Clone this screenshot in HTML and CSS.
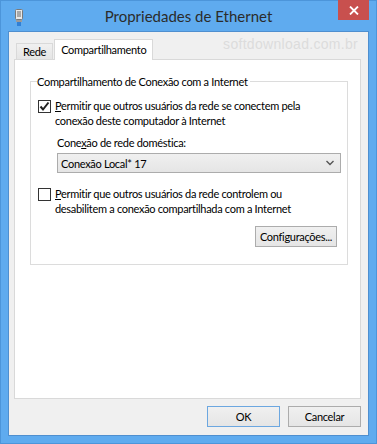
FILE: index.html
```html
<!DOCTYPE html>
<html lang="pt-BR">
<head>
<meta charset="utf-8">
<title>Propriedades de Ethernet</title>
<link rel="stylesheet" href="styles.css">
</head>
<body>
<div class="window">
  <div class="titlebar">
    <svg class="app-icon" width="8" height="17" viewBox="0 0 8 17">
      <rect x="0.5" y="0.5" width="7" height="10" rx="1" fill="#e8e8e8" stroke="#7a7a7a"/>
      <rect x="2.5" y="2" width="1" height="6" fill="#6b6b6b"/>
      <rect x="4.5" y="2" width="1" height="6" fill="#6b6b6b"/>
      <rect x="1" y="11" width="6" height="2" fill="#9a9a9a"/>
      <rect x="2" y="13" width="4" height="4" fill="#2f7fd6"/>
    </svg>
    <div class="title">Propriedades de Ethernet</div>
    <div class="close">
      <svg width="10" height="9" viewBox="0 0 10 9"><path d="M1 0.5 L9 8.5 M9 0.5 L1 8.5" stroke="#fff" stroke-width="1.8"/></svg>
    </div>
  </div>
  <div class="client">
    <div class="watermark">softdownload.com.br</div>
    <div class="tabs">
      <div class="tab">Rede</div>
      <div class="tab active">Compartilhamento</div>
    </div>
    <div class="panel">
      <fieldset class="group">
        <legend>Compartilhamento de Conexão com a Internet</legend>
        <div class="check-row">
          <span class="box checked">
            <svg width="11" height="11" viewBox="0 0 11 11"><path d="M1.5 5.5 L4 8.5 L9.5 1.5" fill="none" stroke="#222" stroke-width="2"/></svg>
          </span>
          <span class="check-text"><span class="key">P</span>ermitir que outros usuários da rede se conectem pela<br>conexão deste computador à Internet</span>
        </div>
        <div class="field-label">Cone<span class="key">x</span>ão de rede doméstica:</div>
        <div class="select">
          <span>Conexão Local* 17</span>
          <svg width="8" height="6" viewBox="0 0 8 6"><path d="M0.5 1 L4 4.5 L7.5 1" fill="none" stroke="#555" stroke-width="1.4"/></svg>
        </div>
        <div class="check-row second">
          <span class="box"></span>
          <span class="check-text"><span class="key">P</span>ermitir que outros usuários da rede controlem ou<br>desabilitem a conexão compartilhada com a Internet</span>
        </div>
        <div class="settings-row">
          <div class="btn settings">Confi<span class="key">g</span>urações...</div>
        </div>
      </fieldset>
    </div>
    <div class="footer">
      <div class="btn wide default">OK</div>
      <div class="btn wide">Cancelar</div>
    </div>
  </div>
</div>
</body>
</html>
```

FILE: styles.css
```css
* { box-sizing: border-box; }
html, body { margin: 0; padding: 0; }
body {
  width: 377px;
  height: 444px;
  overflow: hidden;
  font-family: Lato, "Noto Sans", sans-serif;
  font-size: 11px;
  letter-spacing: -0.3px;
  color: #000;
}
.key { text-decoration: underline; }
.window {
  width: 377px;
  height: 444px;
  background: #5fabef;
  border: 1px solid #4c95da;
  padding: 0 7px 7px 7px;
  display: flex;
  flex-direction: column;
}
.titlebar {
  position: relative;
  height: 30px;
  flex: none;
  display: flex;
  align-items: center;
  justify-content: center;
}
.app-icon {
  position: absolute;
  left: 7px;
  top: 8px;
}
.title {
  font-size: 15px;
  letter-spacing: 0;
  color: #2b2b2b;
  margin-top: -1px;
}
.close {
  position: absolute;
  right: 0;
  top: -1px;
  width: 31px;
  height: 20px;
  background: #c8504e;
  display: flex;
  align-items: center;
  justify-content: center;
}
.client {
  position: relative;
  flex: 1;
  background: #f0f0f0;
  border: 1px solid #4f8fcf;
  padding: 6px 7px 8px 5px;
  display: flex;
  flex-direction: column;
}
.watermark {
  position: absolute;
  right: 10px;
  top: 4px;
  font-family: "Liberation Sans", Arial, sans-serif;
  font-size: 14px;
  letter-spacing: 0.3px;
  color: #dcdcdc;
}
.tabs {
  display: flex;
  align-items: flex-end;
  height: 21px;
  padding-left: 2px;
  position: relative;
  z-index: 1;
}
.tab {
  height: 16px;
  padding: 0 6px;
  border: 1px solid #d9d9d9;
  border-bottom: none;
  background: linear-gradient(#f0f0f0, #e5e5e5);
  line-height: 15px;
}
.tab.active {
  height: 21px;
  width: 99px;
  background: #fff;
  margin-left: 1px;
  margin-bottom: -1px;
  padding: 0 0 0 6px;
  line-height: 19px;
}
.panel {
  height: 340px;
  background: #fff;
  border: 1px solid #d9d9d9;
  padding: 14px 12px 0 15px;
  flex: none;
}
.group {
  margin: 0;
  border: 1px solid #dcdcdc;
  padding: 9px 6px 17px 7px;
}
.group legend {
  padding: 0 2px 0 0;
  margin-left: -1px;
  line-height: 15px;
}
.check-row {
  display: flex;
  align-items: flex-start;
  gap: 4px;
}
.box {
  flex: none;
  width: 13px;
  height: 13px;
  border: 1px solid #333;
  background: #fff;
  margin-top: 2px;
  display: flex;
  align-items: center;
  justify-content: center;
}
.check-text {
  line-height: 15px;
  white-space: nowrap;
}
.field-label {
  margin: 7px 0 0 19px;
  line-height: 15px;
}
.select {
  margin: 3px 0 0 19px;
  height: 20px;
  border: 1px solid #acacac;
  background: linear-gradient(#f0f0f0, #e5e5e5);
  display: flex;
  align-items: center;
  justify-content: space-between;
  padding: 0 6px 0 3px;
}
.check-row.second {
  margin-top: 13px;
}
.settings-row {
  display: flex;
  justify-content: flex-end;
  margin-top: 10px;
  padding-right: 4px;
}
.btn {
  height: 21px;
  border: 1px solid #acacac;
  background: linear-gradient(#f0f0f0, #e5e5e5);
  display: flex;
  align-items: center;
  justify-content: center;
  padding: 0 3px;
}
.btn.settings {
  width: 82px;
  padding: 0;
}
.footer {
  margin-top: auto;
  display: flex;
  justify-content: flex-end;
  gap: 8px;
}
.btn.wide {
  width: 73px;
}
.btn.default {
  border-color: #6ca7e0;
}
```
